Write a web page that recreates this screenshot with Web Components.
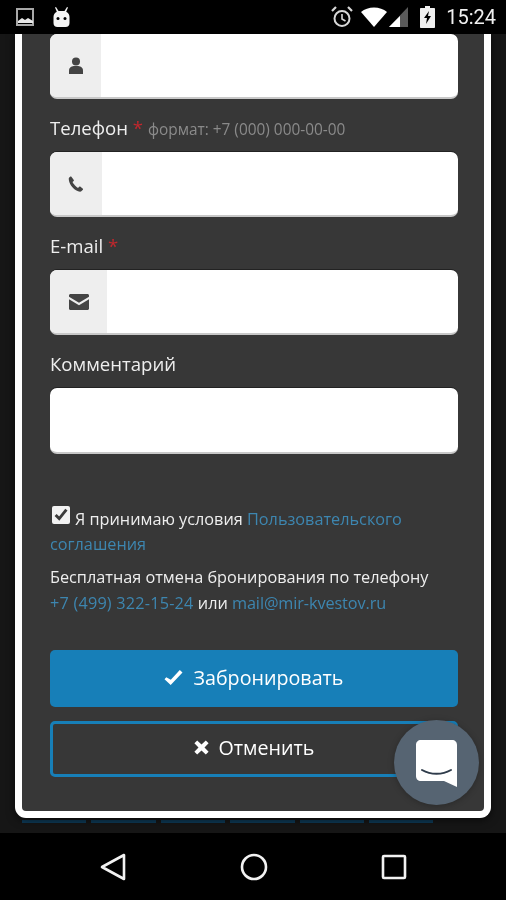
<!DOCTYPE html>
<html>
<head>
<meta charset="utf-8">
<title>Бронирование</title>
<style>
    html, body { margin: 0; padding: 0; background: #000; }
    body { font-family: "Open Sans", "Noto Sans", sans-serif; }
</style>
</head>
<body>
<app-screen>
    <booking-form></booking-form>
</app-screen>

<script>
const ICONS = {
    user: `<svg width="14" height="18" viewBox="0 0 14 18"><circle cx="7" cy="4.6" r="4" fill="currentColor"/><path d="M0 17v-3.6C0 10.600 2.400 9.400 4.600 9h4.800C11.600 9.400 14 10.600 14 13.400V17z" fill="currentColor"/></svg>`,
    phone: `<svg width="16" height="16" viewBox="0 0 16 16"><path d="M2.300 .6 0.800 2C.4 5.800 3 10.500 6.400 13.200c2.400 1.900 4.900 2.700 6.600 2.400l1.900-1.800c.3-.3.300-.7 0-1l-2.700-2.200c-.3-.2-.7-.2-1 .1l-1.200 1.200C8.500 11.300 5.400 8.200 4.500 6.100l1.200-1.200c.3-.3.300-.7.100-1L3.400.7C3.100.3 2.600.3 2.300.6z" fill="currentColor"/></svg>`,
    mail: `<svg width="20" height="16" viewBox="0 0 20 16"><path d="M1.500 0h17C19.300 0 20 .7 20 1.500v1.300l-10 6-10-6V1.500C0 .7.700 0 1.500 0zM0 5.200l10 6 10-6v9.300c0 .8-.7 1.500-1.500 1.500h-17C.7 16 0 15.300 0 14.500z" fill="currentColor"/></svg>`,
    ok: `<svg width="19" height="15" viewBox="0 0 18 15"><path d="M1.800 7.200 0 9.200 6.200 15 18 2.600 15.300 0 6.300 9.800z" fill="currentColor"/></svg>`,
    remove: `<svg width="15" height="15" viewBox="0 0 15 15"><path d="M3.200.4 7.500 4.500 11.800.4 14.600 3.200 10.500 7.500 14.600 11.800 11.800 14.600 7.500 10.500 3.200 14.600.4 11.800 4.500 7.500.4 3.200z" fill="currentColor"/></svg>`
};

class StatusBar extends HTMLElement {
    constructor() {
        super();
        this.attachShadow({mode: "open"}).innerHTML = `
            <style>
                :host { display: flex; align-items: center; height: 34px; background: #000; color: #e8e8e8; padding: 0 10px 0 16px; box-sizing: border-box; }
                svg { display: block; }
                .left { display: flex; align-items: center; gap: 17px; flex: 1; }
                .right { display: flex; align-items: center; }
                .time { font: 20px "Roboto", sans-serif; margin-left: 11px; color: #f0f0f0; }
            </style>
            <div class="left">
                <svg width="19" height="19" viewBox="0 0 19 19"><rect x="1" y="1" width="16" height="16" fill="none" stroke="#a8a8a8" stroke-width="2"/><path d="M2 15v-2l4-3 3 2 3-2 5 3v2z" fill="#e8e8e8"/></svg>
                <svg width="19" height="21" viewBox="0 0 19 21"><path d="M4 0l2.500 4h6L15 0l1 .5L14.200 4.800C16.500 6 17.500 7.800 17.500 10v6c0 2.500-1.500 4-4 4h-8c-2.500 0-4-1.500-4-4v-6c0-2.200 1-4 3.300-5.200L3 .5z" fill="#f4f4f4"/><circle cx="6" cy="11.500" r="1.500" fill="#000"/><circle cx="13" cy="11.500" r="1.500" fill="#000"/></svg>
            </div>
            <div class="right">
                <svg width="22" height="22" viewBox="0 0 22 22" style="margin-right:8px"><circle cx="11" cy="12.500" r="7.500" fill="none" stroke="#d8d8d8" stroke-width="2"/><path d="M11 8v5l3.500 2" fill="none" stroke="#d8d8d8" stroke-width="1.600"/><path d="M1 5l4-4M21 5l-4-4" stroke="#d8d8d8" stroke-width="2.200"/></svg>
                <svg width="26" height="20" viewBox="0 0 26 20" style="margin-right:2px"><path d="M0 5C3.500 2 8 .4 13 .4S22.500 2 26 5L13 20z" fill="#fff"/></svg>
                <svg width="19" height="20" viewBox="0 0 19 20" style="margin-right:12px"><path d="M19 0v20H0z" fill="#5a5a5a"/><path d="M11 9v11H0z" fill="#fff"/></svg>
                <svg width="15" height="22" viewBox="0 0 15 22"><path d="M5 0h5v2h4c.6 0 1 .4 1 1v18c0 .6-.4 1-1 1H1c-.6 0-1-.4-1-1V3c0-.6.4-1 1-1h4z" fill="#f0f0f0"/><path d="M9 5 4 12h3l-1 6 5-8H8z" fill="#000"/></svg>
                <span class="time">15:24</span>
            </div>
        `;
    }
}
customElements.define("status-bar", StatusBar);

class NavBar extends HTMLElement {
    constructor() {
        super();
        this.attachShadow({mode: "open"}).innerHTML = `
            <style>
                :host { display: flex; height: 67px; background: #000; align-items: center; box-sizing: border-box; padding: 0 99px 0 100px; justify-content: space-between; }
                svg { display: block; }
            </style>
            <svg width="26" height="28" viewBox="0 0 26 28"><path d="M24 2v24L2 14z" fill="none" stroke="#f2f2f2" stroke-width="2.600" stroke-linejoin="round"/></svg>
            <svg width="28" height="28" viewBox="0 0 28 28"><circle cx="14" cy="14" r="12" fill="none" stroke="#f2f2f2" stroke-width="2.600"/></svg>
            <svg width="26" height="26" viewBox="0 0 26 26"><rect x="2" y="2" width="22" height="22" rx="1" fill="none" stroke="#f2f2f2" stroke-width="2.600"/></svg>
        `;
    }
}
customElements.define("nav-bar", NavBar);

class AppScreen extends HTMLElement {
    constructor() {
        super();
        this.attachShadow({mode: "open"}).innerHTML = `
            <style>
                :host { display: flex; flex-direction: column; width: 506px; height: 900px; overflow: hidden; background: #000; filter: blur(.45px); }
                .page { flex: 1; min-height: 0; background: #161616; overflow: hidden; padding: 0 15px; display: flex; flex-direction: column; }
                .modal { height: 784px; position: relative; box-sizing: border-box; background: #373737; border: solid #fff; border-width: 0 7px 7px; border-radius: 0 0 11px 11px; box-shadow: 0 2px 8px rgba(0,0,0,.6); }
                .tabs { display: flex; gap: 5px; padding: 2px 7px 0; }
                .tabs i { display: block; width: 64.400px; height: 3px; background: #0e3a57; }
            </style>
            <status-bar></status-bar>
            <div class="page">
                <div class="modal"><slot></slot><chat-bubble></chat-bubble></div>
                <div class="tabs"><i></i><i></i><i></i><i></i><i></i><i></i></div>
            </div>
            <nav-bar></nav-bar>
        `;
    }
}
customElements.define("app-screen", AppScreen);

class FormField extends HTMLElement {
    constructor() {
        super();
        const icon = this.getAttribute("icon");
        const addon = icon ? `<div class="addon" style="width:${this.getAttribute("addon") || 52}px">${ICONS[icon]}</div>` : "";
        const label = this.hasAttribute("first") ? "" : `<div class="label"><slot></slot></div>`;
        this.attachShadow({mode: "open"}).innerHTML = `
            <style>
                :host { display: block; margin-bottom: 17px; }
                .label { font-size: 18.600px; line-height: 24px; height: 24px; margin-bottom: 12px; color: #eee; white-space: nowrap; }
                .box { display: flex; height: 65px; background: #fff; border-radius: 7px; overflow: hidden; box-sizing: border-box; border-bottom: 2px solid #c8c8c8; box-shadow: 0 -1px 0 #222; }
                :host(:last-of-type) .box { height: 66px; }
                .addon { display: flex; align-items: center; justify-content: center; box-sizing: border-box; background: #eee; color: #444; }
            </style>
            ${label}
            <div class="box">${addon}</div>
        `;
    }
}
customElements.define("form-field", FormField);

class ActionButton extends HTMLElement {
    constructor() {
        super();
        const icon = this.getAttribute("icon");
        this.attachShadow({mode: "open"}).innerHTML = `
            <style>
                :host { display: flex; align-items: center; justify-content: center; gap: 10px; box-sizing: border-box; height: 57px; padding-bottom: 3px; border-radius: 5px; font-size: 19.700px; color: #fff; background: #177fb8; }
                :host([outline]) { height: 56px; padding-bottom: 4px; background: transparent; border: 3px solid #177fb8; }
                svg { display: block; }
            </style>
            ${ICONS[icon]}<slot></slot>
        `;
    }
}
customElements.define("action-button", ActionButton);

class ChatBubble extends HTMLElement {
    constructor() {
        super();
        this.attachShadow({mode: "open"}).innerHTML = `
            <style>
                :host { position: absolute; right: 5px; bottom: 6px; width: 85px; height: 85px; border-radius: 50%; background: #566472; display: flex; align-items: center; justify-content: center; box-shadow: 0 1px 6px rgba(0,0,0,.25); }
                svg { display: block; margin-top: 2px; }
            </style>
            <svg width="41" height="47" viewBox="0 0 41 47"><path d="M5 0h31c3 0 5 2 5 5v42l-13-6H5c-3 0-5-2-5-5V5c0-3 2-5 5-5z" fill="#fff"/><path d="M6 30c9 5 20 5 29 0" fill="none" stroke="#2f3c4b" stroke-width="2" stroke-linecap="round"/></svg>
        `;
    }
}
customElements.define("chat-bubble", ChatBubble);

class BookingForm extends HTMLElement {
    constructor() {
        super();
        this.attachShadow({mode: "open"}).innerHTML = `
            <style>
                :host { display: block; padding: 0 26px 0 28px; color: #eee; font-size: 16.250px; line-height: 25px; }
                .req { color: #c0272d; }
                .hint { color: #8a8a8a; font-size: 15.400px; }
                a { color: #3d86b0; text-decoration: none; }
                .terms { margin: 52px 0 0; }
                .terms input { width: 18px; height: 18px; margin: 0 5px 0 2px; vertical-align: 1px; accent-color: #f2f2f2; }
                .note { margin: 7px 0 0; line-height: 26px; }
                .tel { letter-spacing: .2px; }
                .mail { letter-spacing: -.1px; }
                .actions { display: flex; flex-direction: column; gap: 14px; margin-top: 34px; }
            </style>
            <form-field first icon="user" addon="51"></form-field>
            <form-field icon="phone" addon="52">Телефон <span class="req">*</span> <span class="hint">формат: +7 (000) 000-00-00</span></form-field>
            <form-field icon="mail" addon="57">E-mail <span class="req">*</span></form-field>
            <form-field>Комментарий</form-field>
            <p class="terms"><input type="checkbox" checked>Я принимаю условия <a href="#">Пользовательского соглашения</a></p>
            <p class="note">Бесплатная отмена бронирования по телефону<br><a class="tel" href="#">+7 (499) 322-15-24</a> или <a class="mail" href="#">mail@mir-kvestov.ru</a></p>
            <div class="actions">
                <action-button icon="ok">Забронировать</action-button>
                <action-button outline icon="remove">Отменить</action-button>
            </div>
        `;
    }
}
customElements.define("booking-form", BookingForm);
</script>
</body>
</html>
